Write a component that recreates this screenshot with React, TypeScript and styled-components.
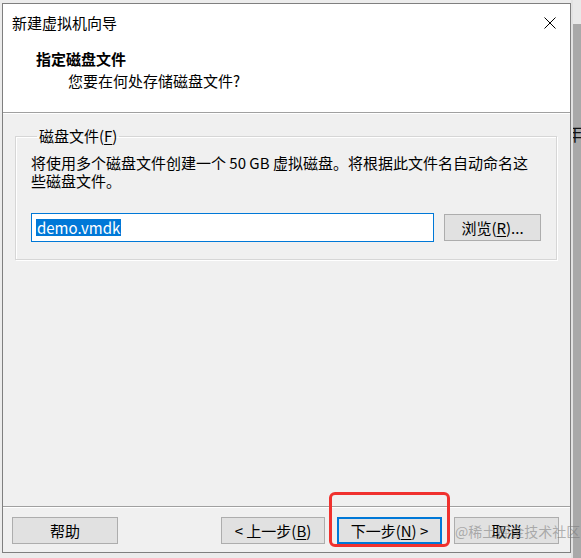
import React from "react";
import styled, { createGlobalStyle } from "styled-components";

const Global = createGlobalStyle`
  html, body { margin: 0; padding: 0; background: #ececec; }
  body { font-family: "Noto Sans CJK SC", "Noto Sans", sans-serif; }
  * { box-sizing: border-box; }
`;

const Page = styled.div`
  position: relative;
  width: 581px;
  height: 558px;
  display: flex;
  align-items: stretch;
  padding-left: 2px;
  background: #ececec;
  overflow: hidden;
`;

const Window = styled.div`
  width: 569px;
  height: 550px;
  margin-top: 3px;
  border: 1px solid #7f7f7f;
  background: #f0f0f0;
  display: flex;
  flex-direction: column;
  font-size: 15px;
  color: #000;
`;

const Strip = styled.div`
  flex: 1;
  background: linear-gradient(to bottom, #e9e9e9 0 24px, #a9a9a9 24px);
  border-left: 2px solid #e2e2e2;
  overflow: hidden;
  padding-top: 122px;
`;

const StripChar = styled.span`
  display: block;
  margin-left: -8px;
  font-size: 18px;
  line-height: 22px;
  color: #111;
`;

const TitleBar = styled.div`
  height: 37px;
  background: #fff;
  display: flex;
  align-items: center;
  justify-content: space-between;
  padding: 0 14px 0 9px;
`;

const TitleText = styled.span`
  font-size: 15px;
  line-height: 20px;
  color: #000;
`;

const Header = styled.div`
  background: #fff;
  height: 72px;
  padding: 8px 0 0 33px;
  border-bottom: 1px solid #a0a0a0;
  box-shadow: 0 1px 0 #fff;
`;

const Heading = styled.div`
  font-weight: 700;
  font-size: 15px;
  line-height: 20px;
`;

const SubHeading = styled.div`
  margin-top: 2px;
  padding-left: 32px;
  font-size: 15px;
  line-height: 20px;
`;

const Content = styled.div`
  flex: 1;
  padding: 15px 13px 0 12px;
`;

const Group = styled.fieldset`
  margin: 0;
  padding: 10px 15px 17px 15px;
  border: 1px solid #d6d6d6;
  box-shadow: inset 1px 1px 0 #fff, 1px 1px 0 #fff;
`;

const Legend = styled.legend`
  padding: 0 2px;
  margin-left: 6px;
  font-size: 15px;
  line-height: 16px;
`;

const Desc = styled.p`
  margin: 0;
  font-size: 15px;
  line-height: 18px;
  white-space: nowrap;
`;

const FieldRow = styled.div`
  margin-top: 23px;
  display: flex;
  align-items: center;
  gap: 10px;
`;

const TextBox = styled.div`
  width: 403px;
  height: 29px;
  background: #fff;
  border: 1px solid #0078d7;
  display: flex;
  align-items: center;
  padding-left: 4px;
`;

const Selected = styled.span`
  background: #0078d7;
  color: #fff;
  font-size: 15px;
  line-height: 17px;
  padding: 0 1px;
`;

const Button = styled.button<{ $primary?: boolean; $w?: number }>`
  width: ${(p) => p.$w ?? 105}px;
  height: 27px;
  padding: 0;
  background: #e1e1e1;
  border: 1px solid ${(p) => (p.$primary ? "#0078d7" : "#adadad")};
  box-shadow: ${(p) => (p.$primary ? "inset 0 0 0 1px #0078d7" : "none")};
  font-family: "Noto Sans CJK SC", "Noto Sans", sans-serif;
  font-size: 15px;
  line-height: 18px;
  color: #000;
`;

const U = styled.span`
  text-decoration: underline;
  text-underline-offset: 2px;
`;

const Footer = styled.div`
  border-top: 1px solid #a0a0a0;
  box-shadow: inset 0 1px 0 #fff;
  padding: 10px 11px 8px 9px;
  display: flex;
  align-items: center;
`;

const Spacer = styled.div`
  flex: 1;
`;

const NavGroup = styled.div`
  display: flex;
  gap: 12px;
`;

const Highlight = styled.div`
  position: absolute;
  left: 329px;
  top: 492px;
  width: 121px;
  height: 55px;
  border: 3px solid #f0312e;
  border-radius: 6px;
  pointer-events: none;
`;

const Watermark = styled.div`
  position: absolute;
  left: 455px;
  top: 522px;
  font-size: 14px;
  line-height: 18px;
  color: rgba(120, 120, 120, 0.55);
  white-space: nowrap;
  pointer-events: none;
`;

const CloseIcon = () => (
  <svg width="12" height="12" viewBox="0 0 12 12">
    <path d="M0.5 0.5 L11.5 11.5 M11.5 0.5 L0.5 11.5" stroke="#000" strokeWidth="1" fill="none" />
  </svg>
);

export default function App() {
  return (
    <>
      <Global />
      <Page>
        <Window>
          <TitleBar>
            <TitleText>新建虚拟机向导</TitleText>
            <CloseIcon />
          </TitleBar>
          <Header>
            <Heading>指定磁盘文件</Heading>
            <SubHeading>您要在何处存储磁盘文件?</SubHeading>
          </Header>
          <Content>
            <Group>
              <Legend>
                磁盘文件(<U>F</U>)
              </Legend>
              <Desc>将使用多个磁盘文件创建一个 50 GB 虚拟磁盘。将根据此文件名自动命名这</Desc>
              <Desc>些磁盘文件。</Desc>
              <FieldRow>
                <TextBox>
                  <Selected>demo.vmdk</Selected>
                </TextBox>
                <Button $w={97}>
                  浏览(<U>R</U>)...
                </Button>
              </FieldRow>
            </Group>
          </Content>
          <Footer>
            <Button $w={106}>帮助</Button>
            <Spacer />
            <NavGroup>
              <Button $w={104}>
                &lt; 上一步(<U>B</U>)
              </Button>
              <Button $primary $w={105}>
                下一步(<U>N</U>) &gt;
              </Button>
              <Button $w={105}>取消</Button>
            </NavGroup>
          </Footer>
        </Window>
        <Strip>
          <StripChar>年</StripChar>
        </Strip>
        <Highlight />
        <Watermark>@稀土掘金技术社区</Watermark>
      </Page>
    </>
  );
}
